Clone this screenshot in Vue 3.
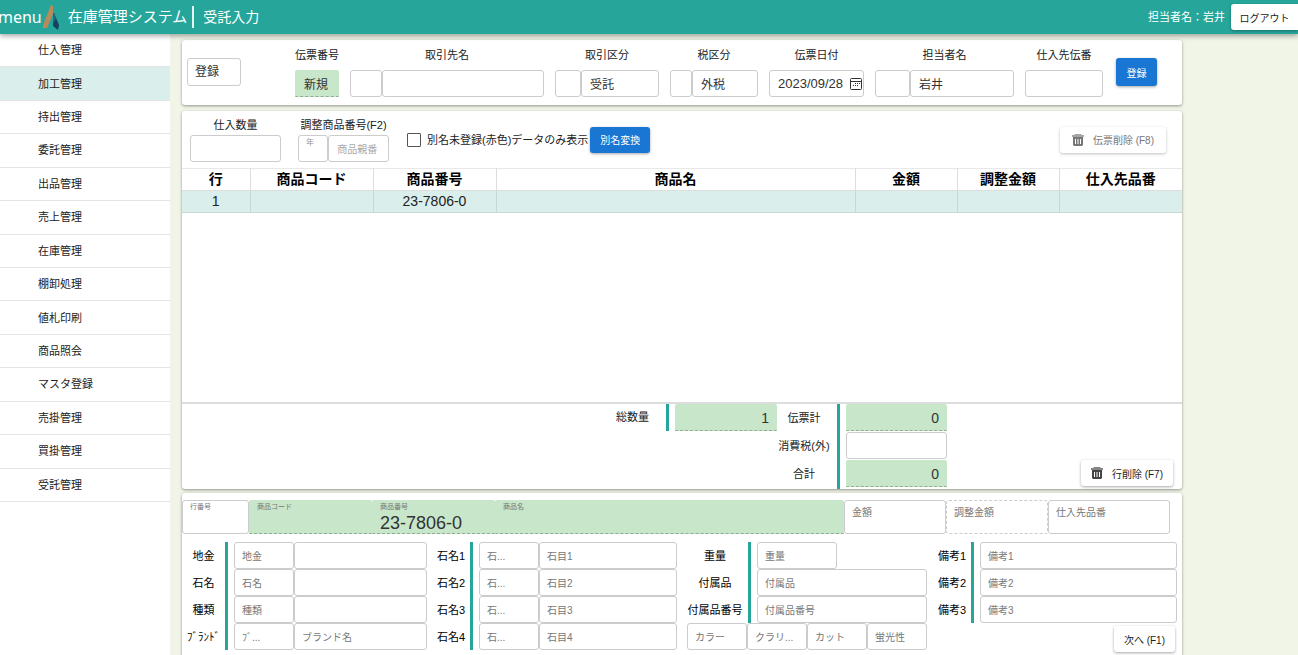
<script setup>
import { ref } from 'vue'

const menuItems = [
  '仕入管理', '加工管理', '持出管理', '委託管理', '出品管理', '売上管理', '在庫管理',
  '棚卸処理', '値札印刷', '商品照会', 'マスタ登録', '売掛管理', '買掛管理', '受託管理'
]
const activeItem = ref('加工管理')
const unregisteredOnly = ref(false)

const slipFields = [
  { id: 'slip-no', label: '伝票番号', inputs: [{ value: '新規', kind: 'locked' }] },
  { id: 'client', label: '取引先名', layout: 'client', inputs: [{ value: '' }, { value: '' }] },
  { id: 'deal', label: '取引区分', layout: 'deal', inputs: [{ value: '' }, { value: '受託' }] },
  { id: 'tax', label: '税区分', layout: 'tax', inputs: [{ value: '' }, { value: '外税' }] },
  { id: 'date', label: '伝票日付', inputs: [{ value: '2023/09/28', kind: 'date' }] },
  { id: 'staff', label: '担当者名', layout: 'staff', inputs: [{ value: '' }, { value: '岩井' }] },
  { id: 'supplier-slip', label: '仕入先伝番', inputs: [{ value: '' }] }
]

const columns = ['行', '商品コード', '商品番号', '商品名', '金額', '調整金額', '仕入先品番']
const rows = [['1', '', '23-7806-0', '', '', '', '']]

const lineFields = [
  { id: 'line-no', label: '行番号', kind: 'floating', value: '' },
  { id: 'line-code', label: '商品コード', kind: 'floating locked', value: '' },
  { id: 'line-item', label: '商品番号', kind: 'floating locked', value: '23-7806-0' },
  { id: 'line-name', label: '商品名', kind: 'floating locked', value: '' },
  { id: 'line-amount', label: '金額', kind: '', value: '' },
  { id: 'line-adjust', label: '調整金額', kind: 'dashed', value: '' },
  { id: 'line-supplier', label: '仕入先品番', kind: '', value: '' }
]

const detailGroups = [
  {
    name: 'metal',
    rows: [
      { label: '地金', hints: ['地金', ''] },
      { label: '石名', hints: ['石名', ''] },
      { label: '種類', hints: ['種類', ''] },
      { label: 'ﾌﾞﾗﾝﾄﾞ', hints: ['ﾌﾞ...', 'ブランド名'] }
    ]
  },
  {
    name: 'stone',
    rows: [1, 2, 3, 4].map((n) => ({ label: '石名' + n, hints: ['石...', '石目' + n] }))
  },
  {
    name: 'extra',
    rows: [
      { label: '重量', hints: ['重量'], short: true },
      { label: '付属品', hints: ['付属品'] },
      { label: '付属品番号', hints: ['付属品番号'] }
    ],
    grades: ['カラー', 'クラリ...', 'カット', '蛍光性']
  },
  {
    name: 'note',
    rows: [1, 2, 3].map((n) => ({ label: '備考' + n, hints: ['備考' + n] })),
    next: true
  }
]
</script>

<template>
  <div class="app">
    <header class="topbar">
      <button type="button" class="menu-button">menu</button>
      <svg class="logo" viewBox="0 0 18 26" aria-hidden="true">
        <path d="M9 1 L11 2 L11 10 L5 24 L1 24 L1 21 Z" fill="#b98a5a" />
        <path d="M11 9 L12 9 L17 21 L16 26 L11 22 Z" fill="#17405f" />
        <path d="M11 9 L12 9 L14 14 L11 20 Z" fill="#2a6680" />
      </svg>
      <h1 class="title">在庫管理システム</h1>
      <span class="screen">受託入力</span>
      <span class="user">担当者名：岩井</span>
      <button type="button" class="btn logout">ログアウト</button>
    </header>

    <div class="body">
      <nav class="sidebar">
        <a
          v-for="item in menuItems"
          :key="item"
          href="#"
          :class="{ active: item === activeItem }"
          @click.prevent="activeItem = item"
        >{{ item }}</a>
      </nav>

      <main class="main">
        <section class="card slip">
          <select class="box mode" aria-label="処理区分">
            <option>登録</option>
          </select>
          <div class="slip-fields">
            <div v-for="f in slipFields" :key="f.id" class="field">
              <label :for="f.id">{{ f.label }}</label>
              <div class="inputs" :class="f.layout">
                <div v-for="(inp, i) in f.inputs" :key="i" class="box" :class="inp.kind">
                  <input
                    :id="i === f.inputs.length - 1 ? f.id : null"
                    type="text"
                    :value="inp.value"
                    :aria-label="i === f.inputs.length - 1 ? null : f.label + 'コード'"
                  />
                  <svg v-if="inp.kind === 'date'" viewBox="0 0 12 12" aria-hidden="true">
                    <path d="M1.500 .5h9a1 1 0 0 1 1 1v9a1 1 0 0 1-1 1h-9a1 1 0 0 1-1-1v-9a1 1 0 0 1 1-1zM.5 3.500h11" fill="none" stroke="#333" />
                    <path d="M5 5h1v1H5zM7 5h1v1H7zM9 5h1v1H9zM3 7h1v1H3zM5 7h1v1H5zM7 7h1v1H7z" fill="#333" />
                  </svg>
                </div>
              </div>
            </div>
          </div>
          <button type="button" class="btn primary">登録</button>
        </section>

        <section class="card list">
          <div class="toolbar">
            <div class="field quantity">
              <label for="qty">仕入数量</label>
              <div class="box"><input id="qty" type="text" /></div>
            </div>
            <div class="field adjust">
              <label for="adjust-no">調整商品番号(F2)</label>
              <div class="inputs item-no">
                <div class="box year">
                  <label for="adjust-year">年</label>
                  <input id="adjust-year" type="text" />
                </div>
                <div class="box pale"><input id="adjust-no" type="text" placeholder="商品親番" /></div>
              </div>
            </div>
            <label class="check">
              <input v-model="unregisteredOnly" type="checkbox" />
              <span>別名未登録(赤色)データのみ表示</span>
            </label>
            <button type="button" class="btn primary convert">別名変換</button>
            <button type="button" class="btn delete" disabled>
              <svg viewBox="0 0 12 12" aria-hidden="true">
                <path d="M3 0h6l1 1h2v2H0V1h2z" opacity=".65" />
                <path fill-rule="evenodd" d="M1 3h10v8l-1 1H2l-1-1zM3 5v5h1V5zM5.500 5v5h1V5zM8 5v5h1V5z" />
              </svg>
              伝票削除 (F8)
            </button>
          </div>

          <div class="table-area">
            <table>
              <colgroup>
                <col class="c-line" /><col class="c-code" /><col class="c-code" /><col />
                <col class="c-money" /><col class="c-money" /><col class="c-code" />
              </colgroup>
              <thead>
                <tr><th v-for="c in columns" :key="c" scope="col">{{ c }}</th></tr>
              </thead>
              <tbody>
                <tr v-for="(r, i) in rows" :key="i">
                  <td v-for="(cell, j) in r" :key="j">{{ cell }}</td>
                </tr>
              </tbody>
            </table>
          </div>

          <div class="totals">
            <label for="total-qty" class="qty-label">総数量</label>
            <div class="bar">
              <div class="box locked number"><input id="total-qty" type="text" value="1" readonly /></div>
            </div>
            <div class="sum-labels">
              <label for="slip-sum">伝票計</label>
              <label for="slip-tax">消費税(外)</label>
              <label for="slip-total">合計</label>
            </div>
            <div class="bar sums">
              <div class="box locked number"><input id="slip-sum" type="text" value="0" readonly /></div>
              <div class="box number"><input id="slip-tax" type="text" /></div>
              <div class="box locked number"><input id="slip-total" type="text" value="0" readonly /></div>
            </div>
            <button type="button" class="btn delete row-delete">
              <svg viewBox="0 0 12 12" aria-hidden="true">
                <path d="M3 0h6l1 1h2v2H0V1h2z" opacity=".65" />
                <path fill-rule="evenodd" d="M1 3h10v8l-1 1H2l-1-1zM3 5v5h1V5zM5.500 5v5h1V5zM8 5v5h1V5z" />
              </svg>
              行削除 (F7)
            </button>
          </div>
        </section>

        <section class="card detail">
          <div class="line-fields">
            <div v-for="f in lineFields" :key="f.id" class="box tall" :class="f.kind">
              <label :for="f.id">{{ f.label }}</label>
              <input :id="f.id" type="text" :value="f.value" />
            </div>
          </div>

          <div class="groups">
            <div v-for="g in detailGroups" :key="g.name" class="group" :class="g.name">
              <div v-for="(r, i) in g.rows" :key="i" class="group-row">
                <label :for="g.name + i">{{ r.label }}</label>
                <div class="bar" :class="{ pair: r.hints.length > 1, short: r.short }">
                  <div v-for="(h, k) in r.hints" :key="k" class="box">
                    <input
                      :id="k === 0 ? g.name + i : null"
                      type="text"
                      :placeholder="h"
                      :aria-label="k === 0 ? null : r.label + '名称'"
                    />
                  </div>
                </div>
              </div>
              <div v-if="g.grades" class="grades">
                <div v-for="h in g.grades" :key="h" class="box">
                  <input type="text" :placeholder="h" :aria-label="h" />
                </div>
              </div>
              <button v-if="g.next" type="button" class="btn next">次へ (F1)</button>
            </div>
          </div>
        </section>
      </main>
    </div>
  </div>
</template>

<style>
body {
  margin: 0;
  background: #f0f5e7;
}
</style>

<style scoped>
* {
  box-sizing: border-box;
}

.app {
  display: flex;
  flex-direction: column;
  min-height: 100vh;
  overflow-x: hidden;
  font-family: "Liberation Sans", "Noto Sans CJK JP", sans-serif;
  font-size: 11px;
  line-height: 16px;
  color: #222;
}

input,
select,
button {
  font-family: inherit;
  color: inherit;
  margin: 0;
}

/* top bar */
.topbar {
  position: relative;
  display: flex;
  align-items: center;
  height: 34px;
  background: #26a69a;
  color: #fff;
  box-shadow: 0 2px 5px rgba(0, 0, 0, 0.35);
}

.menu-button {
  margin-left: -2px;
  padding: 0;
  border: 0;
  background: none;
  font: 16px/24px "Noto Sans", sans-serif;
}

.logo {
  width: 18px;
  height: 26px;
  margin-right: 8px;
}

.title,
.screen {
  margin: 0;
  font-size: 14px;
  font-weight: 400;
  line-height: 22px;
}

.title {
  padding-right: 5px;
  border-right: 2px solid #e3f4f2;
  font-size: 15px;
}

.screen {
  padding-left: 9px;
}

.user {
  margin-left: auto;
  margin-right: 6px;
}

.btn {
  display: flex;
  align-items: center;
  justify-content: center;
  flex: none;
  height: 26px;
  padding: 0 10px;
  border: 0;
  border-radius: 3px;
  background: #fff;
  color: #222;
  font-size: 10px;
  white-space: nowrap;
  box-shadow: 0 1px 3px rgba(0, 0, 0, 0.35);
}

.logout {
  width: 67px;
  padding: 0;
  border-radius: 3px 0 0 3px;
}

.primary {
  background: #1976d2;
  color: #fff;
}

.delete svg {
  width: 12px;
  height: 12px;
  margin-right: 9px;
  fill: #444;
}

.delete:disabled {
  color: #777;
  box-shadow: 0 1px 3px rgba(0, 0, 0, 0.25);
}

.delete:disabled svg {
  fill: #777;
}

/* navigation */
.body {
  display: flex;
  flex: 1;
  background: linear-gradient(to right, #fff 170px, #f0f5e7 170px);
}

.sidebar {
  display: grid;
  grid-auto-rows: 1fr;
  align-self: flex-start;
  flex: none;
  width: 170px;
  min-height: 468px;
}

.sidebar a {
  display: flex;
  align-items: center;
  padding-left: 38px;
  border-bottom: 1px solid #e4e4e4;
  color: #222;
  text-decoration: none;
}

.sidebar a.active {
  background: #daeeeb;
}

/* cards */
.main {
  display: flex;
  flex-direction: column;
  flex: 1;
  min-width: 0;
  padding: 6px 116px 0 12px;
}

.card {
  background: #fff;
  border-radius: 3px;
  box-shadow: 0 1px 3px rgba(0, 0, 0, 0.4);
}

.box {
  display: flex;
  align-items: center;
  min-width: 0;
  height: 27px;
  border: 1px solid #ccc;
  border-radius: 3px;
  background: #fff;
  color: #333;
}

.box input {
  flex: 1;
  width: 100%;
  min-width: 0;
  height: 100%;
  padding: 0 8px;
  border: 0;
  outline: 0;
  background: none;
  font-size: 12px;
}

.box input::placeholder {
  color: #777;
  font-size: 10px;
  opacity: 1;
}

.box.locked {
  border-color: transparent;
  border-bottom: 1px dashed #8fae91;
  border-radius: 2px 2px 0 0;
  background: #c8e6c9;
}

.box.date {
  padding-right: 1px;
}

.box.date input {
  padding-right: 0;
  font-size: 13px;
}

.box.date svg {
  flex: none;
  width: 12px;
  height: 12px;
}

.field label {
  display: block;
  text-align: center;
  white-space: nowrap;
}

.inputs {
  display: grid;
}

/* slip header */
.slip {
  display: flex;
  align-items: center;
  padding: 7px 25px 8px 5px;
}

.mode {
  flex: none;
  width: 54px;
  height: 28px;
  padding: 0 7px;
  appearance: none;
  font-size: 12px;
}

.slip-fields {
  display: grid;
  flex: 1;
  grid-template-columns: 44fr 194fr 104fr 88fr 95fr 139fr 78fr;
  gap: 11px;
  margin: 0 13px 0 54px;
}

.slip-fields .field {
  min-width: 0;
}

.slip-fields label {
  margin-bottom: 7px;
}

.client {
  grid-template-columns: 32fr 162fr;
}

.deal {
  grid-template-columns: 26fr 78fr;
}

.tax {
  grid-template-columns: 22fr 66fr;
}

.staff {
  grid-template-columns: 35fr 104fr;
}

.slip .primary {
  width: 41px;
  height: 28px;
}

/* line list */
.list {
  margin-top: 6px;
}

.toolbar {
  display: flex;
  align-items: center;
  padding: 6px 16px 6px 8px;
}

.toolbar .field > label {
  margin-bottom: 2px;
}

.quantity {
  width: 91px;
  margin-right: 17px;
}

.adjust {
  width: 91px;
  margin-right: 18px;
}

.item-no {
  grid-template-columns: 1fr 2fr;
}

.year {
  flex-direction: column;
  align-items: flex-start;
}

.year label {
  padding-left: 7px;
  color: #999;
  font-size: 8px;
  line-height: 14px;
}

.pale input::placeholder {
  color: #aaa;
}

.check {
  display: flex;
  align-items: center;
  gap: 6px;
  margin-right: 2px;
  white-space: nowrap;
}

.check input {
  width: 14px;
  height: 14px;
  border: 1px solid #555;
  border-radius: 1px;
  background: #fff;
  appearance: none;
}

.check input:checked {
  background: #1976d2;
}

.toolbar .delete {
  margin-left: auto;
  padding: 0 12px;
}

.table-area {
  min-height: 236px;
  border-bottom: 2px solid #ddd;
}

table {
  width: 100%;
  table-layout: fixed;
  border-collapse: collapse;
  font-size: 14px;
}

.c-line {
  width: 68px;
}

.c-code {
  width: 123px;
}

.c-money {
  width: 102px;
}

th,
td {
  height: 22px;
  padding: 0 0 1px;
  border-right: 1px solid #ddd;
  text-align: center;
  line-height: 19px;
}

th {
  border-top: 1px solid #e8e8e8;
  border-bottom: 1px solid #ddd;
  color: #000;
}

td {
  border-right-color: #c5d8d5;
  border-bottom: 1px solid #c9d6d4;
  background: #daeeeb;
}

th:last-child,
td:last-child {
  border-right: 0;
}

/* totals */
.totals {
  display: grid;
  grid-template-columns: 484fr 111fr 60fr 110fr 235fr;
  min-height: 85px;
}

.qty-label {
  padding: 5px 17px 0 0;
  text-align: right;
}

.bar {
  align-self: start;
  padding-left: 6px;
  border-left: 3px solid #26a69a;
}

.number input {
  padding: 0 7px;
  text-align: right;
  font-size: 14px;
}

.sum-labels {
  display: grid;
  grid-auto-rows: 28px;
  align-items: center;
  justify-items: center;
  padding-right: 6px;
  white-space: nowrap;
}

.sums {
  display: grid;
  grid-auto-rows: 28px;
  align-self: stretch;
}

.row-delete {
  place-self: end;
  margin: 0 9px 3px 0;
}

/* line detail */
.detail {
  flex: 1;
  margin-top: 4px;
  padding: 7px 0 4px;
  border-radius: 3px 3px 0 0;
}

.line-fields {
  display: grid;
  grid-template-columns: 67fr 123fr 123fr 349fr 102fr 102fr 122fr;
  margin-right: 12px;
}

.tall {
  flex-direction: column;
  align-items: stretch;
  height: 34px;
}

.tall label {
  padding-left: 7px;
  color: #777;
  font-size: 10px;
  line-height: 24px;
}

.tall.floating label {
  font-size: 7px;
  line-height: 12px;
}

.tall input {
  padding: 0 7px 3px;
  font-size: 18px;
}

.box.dashed {
  border-style: dashed;
}

.groups {
  display: grid;
  grid-template-columns: 245fr 250fr 250fr 250fr;
  margin: 8px 5px 0 0;
}

.groups .box input {
  padding: 0 7px;
}

.group {
  min-width: 0;
}

.extra {
  padding-left: 10px;
}

.note {
  padding-left: 6px;
}

.group-row {
  display: grid;
  grid-template-columns: 43px 1fr;
}

.extra .group-row {
  grid-template-columns: 61px 1fr;
}

.note .group-row {
  grid-template-columns: 38px 1fr;
}

.group-row label {
  align-self: center;
  text-align: center;
  white-space: nowrap;
  color: #000;
}

.stone label {
  padding-left: 5px;
}

.extra label {
  padding-right: 5px;
}

.pair {
  display: grid;
  grid-template-columns: 60px 1fr;
}

.short .box {
  width: 80px;
}

.grades {
  display: grid;
  grid-template-columns: repeat(4, 1fr);
}

.next {
  margin: 3px 2px 0 auto;
}
</style>
